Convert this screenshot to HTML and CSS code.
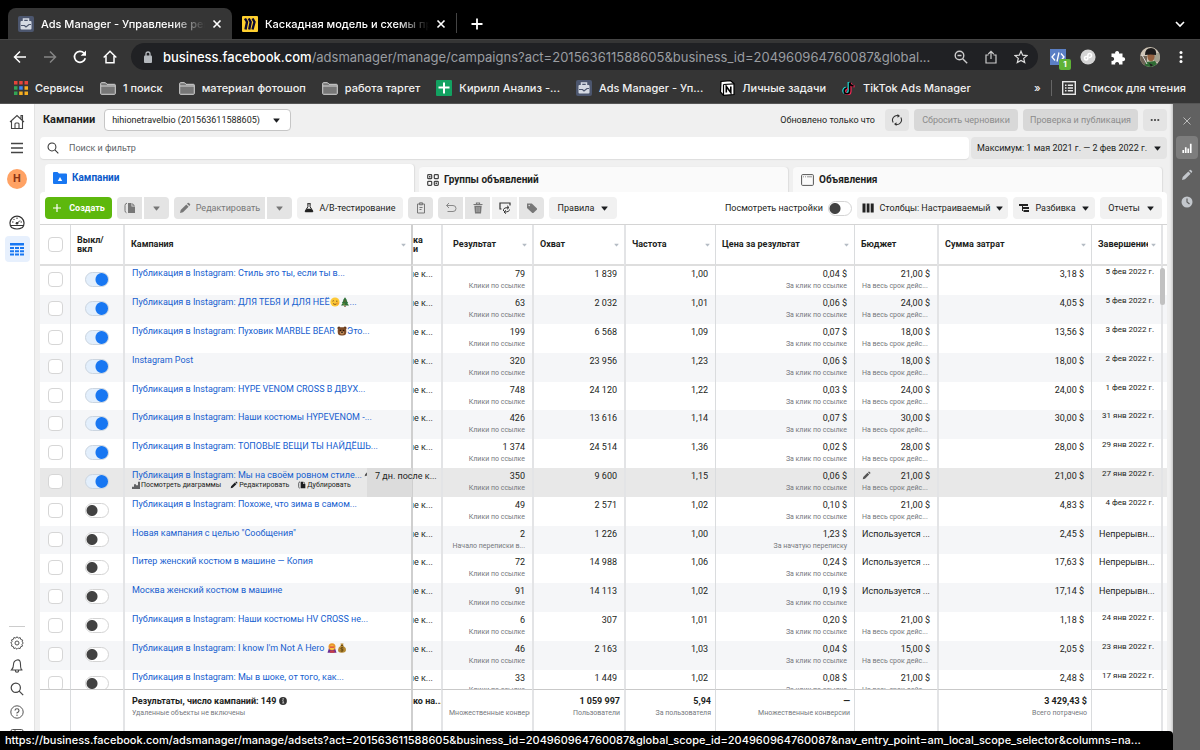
FILE: index.html
```html
<!DOCTYPE html>
<html lang="ru">
<head>
<meta charset="utf-8">
<title>Ads Manager - Управление рекламой</title>
<link rel="stylesheet" href="styles.css">
</head>
<body>
<svg class="sprite" aria-hidden="true">
  <symbol id="x" viewBox="0 0 10 10"><path d="M1.500 1.500l7 7M8.500 1.500l-7 7" fill="none" stroke="currentColor" stroke-width="1.600"/></symbol>
  <symbol id="ads" viewBox="0 0 16 16"><rect width="16" height="16" rx="2" fill="#4c566e"/><path d="M5.500 5V3h5v2" fill="none" stroke="#d5dae3" stroke-width="1.500"/><rect x="2.500" y="5" width="11" height="8.500" rx="1" fill="#d5dae3"/><path d="M3 9.500h3.500l1.500 1.500 3-2.500h2" fill="none" stroke="#4c566e" stroke-width="1.200"/></symbol>
  <symbol id="folder" viewBox="0 0 16 13"><path d="M.7 11.500V1.500q0-.8.8-.8h4l1.500 1.600h7.500q.8 0 .8.800v8.400q0 .8-.8.800h-13q-.8 0-.8-.8z" fill="#777" stroke="#d6d6d6"/><path d="M1 4h14" stroke="#d6d6d6"/></symbol>
  <symbol id="caret" viewBox="0 0 8 5"><path d="M.8.3h6.400q.7 0 .3.600L4.500 4.500q-.5.500-1 0L.5.900Q.1.300.8.300z" fill="currentColor"/></symbol>
  <symbol id="pencil" viewBox="0 0 12 12"><path d="M1 11l.7-3L7.300 2.400l2.300 2.300L4 10.300zM8 1.700l.7-.7q.6-.5 1.200 0l1.100 1.100q.5.600 0 1.200l-.7.700z" fill="currentColor"/></symbol>
  <symbol id="copy" viewBox="0 0 12 12"><path d="M3 1.200Q1 1.500 1 3.500v5q0 2 1.500 2.300" fill="none" stroke="currentColor"/><path d="M4 1h3.500v3.500H11V11H4z" fill="currentColor"/><path d="M8.300.900L11 3.700H8.300z" fill="currentColor"/></symbol>
  <symbol id="chart" viewBox="0 0 12 12"><path d="M.5 8.500h2V12h-2zM3.500 5h2v7h-2zM6.500 6.500h2V12h-2zM9.500 1h2v11h-2z" fill="currentColor"/></symbol>
  <symbol id="search" viewBox="0 0 14 14"><circle cx="5.800" cy="5.800" r="4.600" fill="none" stroke="currentColor" stroke-width="1.200"/><path d="M9.200 9.200l4 4" stroke="currentColor" stroke-width="1.200"/></symbol>
  <symbol id="face" viewBox="0 0 10 10"><circle cx="5" cy="5" r="4.600" fill="#fdc936"/><path d="M2.500 4.200q.8-1 1.600 0M6 4.200h1.500M3 6.500q2 2 4 0" fill="none" stroke="#6b431c" stroke-width=".8"/><circle cx="7.500" cy="6.500" r="1.300" fill="#f5a12c"/></symbol>
  <symbol id="tree" viewBox="0 0 10 10"><path d="M5 .3L7.200 3.500H6.500L8.200 6H7.300l1.700 2.600H1L2.700 6h-.9l1.700-2.500h-.7z" fill="#2f7137"/><path d="M4.400 8.600h1.200V10H4.400z" fill="#7a4a22"/><circle cx="5" cy="4" r=".5" fill="#e33"/><circle cx="4" cy="7" r=".5" fill="#fc3"/></symbol>
  <symbol id="bear" viewBox="0 0 10 10"><circle cx="2" cy="2" r="1.600" fill="#5f371b"/><circle cx="8" cy="2" r="1.600" fill="#5f371b"/><rect x=".7" y="1.200" width="8.600" height="8.400" rx="3.600" fill="#7d4a26"/><ellipse cx="5" cy="6.800" rx="2.200" ry="1.700" fill="#c08c5b"/><circle cx="3.300" cy="4.300" r=".6"/><circle cx="6.700" cy="4.300" r=".6"/><ellipse cx="5" cy="6.200" rx=".9" ry=".6"/></symbol>
  <symbol id="hero" viewBox="0 0 10 10"><path d="M.5 9.800L2 5h6l1.500 4.800z" fill="#6c2d92"/><path d="M3 9.800V7.500h4.500v2.300z" fill="#c53c46"/><circle cx="5" cy="3.800" r="3.500" fill="#e8972c"/><circle cx="5" cy="4.600" r="2.300" fill="#fcc74a"/><path d="M2.800 3.500h4.400v1.200H2.800z" fill="#d4313f"/></symbol>
  <symbol id="money" viewBox="0 0 10 10"><path d="M3.500.500h3L6 2.500q3 2 3 4.500T5 9.700 1 7t3-4.500z" fill="#b58a35"/><path d="M3.800 2.500h2.400" stroke="#6b4a14"/><path d="M6.500 5q-1.500-1-2.500 0t1 1.300 1 1.300-2.500.2M5 4v5" stroke="#5d410f" stroke-width=".7" fill="none"/></symbol>
</svg>

<header class="browser">
  <div class="tabstrip">
    <div class="btab active"><svg class="fav"><use href="#ads"/></svg><span class="btitle">Ads Manager - Управление рекламой</span><button class="plain" aria-label="Закрыть"><svg class="i10"><use href="#x"/></svg></button></div>
    <div class="btab"><svg class="fav" viewBox="0 0 16 16"><rect width="16" height="16" rx="1" fill="#ffd02f"/><path d="M3 2.500l2 3.500-1.500 7.500M6.700 2.500l2 3.500-1.500 7.500M10.500 2.500l2 3.500-2 7.500" fill="none" stroke="#0b0832" stroke-width="2.400"/></svg><span class="btitle">Каскадная модель и схемы процессов</span><button class="plain" aria-label="Закрыть"><svg class="i10"><use href="#x"/></svg></button></div>
    <i class="tabdiv"></i>
    <button class="plain newtab" aria-label="Новая вкладка"><svg class="i12" viewBox="0 0 12 12"><path d="M6 .500v11M.5 6h11" stroke="#fff" stroke-width="1.800"/></svg></button>
    <button class="plain more" aria-label="Список вкладок"><svg class="i10" viewBox="0 0 10 10"><path d="M1 3l4 4 4-4" fill="none" stroke="#fff" stroke-width="1.600"/></svg></button>
  </div>
  <div class="navbar">
    <button class="plain" aria-label="Назад"><svg class="i14" viewBox="0 0 14 14"><path d="M13 7H2M7 1.500L1.500 7 7 12.500" fill="none" stroke="#fff" stroke-width="1.500"/></svg></button>
    <button class="plain" aria-label="Вперёд"><svg class="i14" viewBox="0 0 14 14"><path d="M1 7h11M7 1.500L12.500 7 7 12.500" fill="none" stroke="#858585" stroke-width="1.500"/></svg></button>
    <button class="plain" aria-label="Обновить"><svg class="i14" viewBox="0 0 14 14"><path d="M12.300 8.300A5.500 5.500 0 1 1 11 3" fill="none" stroke="#fff" stroke-width="1.700"/><path d="M13 .500v5.300H7.700z" fill="#fff"/></svg></button>
    <button class="plain" aria-label="Домой"><svg class="i14" viewBox="0 0 14 14"><path d="M.7 7.500L7 1.300l6.300 6.200M3 6v6.700h8V6" fill="none" stroke="#fff" stroke-width="1.500"/></svg></button>
    <div class="omni">
      <svg class="lock" viewBox="0 0 10 12"><rect x="1" y="4.500" width="8" height="7.500" rx="1" fill="#b4b8bd"/><path d="M3 5V3q0-2 2-2t2 2v2" fill="none" stroke="#b4b8bd" stroke-width="1.300"/></svg>
      <span class="url"><b>business.facebook.com</b>/adsmanager/manage/campaigns?act=201563611588605&amp;business_id=204960964760087&amp;global...</span>
      <button class="plain" aria-label="Масштаб"><svg class="i14" viewBox="0 0 14 14"><circle cx="5.500" cy="5.500" r="4.300" fill="none" stroke="#ccc" stroke-width="1.400"/><path d="M8.700 8.700l4.500 4.500M3.500 5.500h4" stroke="#ccc" stroke-width="1.400"/></svg></button>
      <button class="plain" aria-label="Поделиться"><svg class="i14" viewBox="0 0 14 14"><path d="M4.500 5H2v8h10V5H9.500M7 9V1.500M4.300 4L7 1.300 9.700 4" fill="none" stroke="#ccc" stroke-width="1.200"/></svg></button>
      <button class="plain" aria-label="В закладки"><svg class="i14" viewBox="0 0 14 14"><path d="M7 1.200l1.700 4 4.300.4-3.300 2.800 1 4.200L7 10.400l-3.700 2.200 1-4.200L1 5.600l4.300-.4z" fill="none" stroke="#ddd" stroke-width="1.200"/></svg></button>
    </div>
    <span class="ext"><svg class="i16" viewBox="0 0 16 16"><rect width="16" height="16" fill="#5b7fc4"/><path d="M5 4.500L2 8l3 3.500M11 4.500L14 8l-3 3.500M9 3.500l-2 9" fill="none" stroke="#fff" stroke-width="1.300"/></svg><em class="badge">1</em></span>
    <svg class="i16" viewBox="0 0 16 16"><circle cx="8" cy="8" r="7.600" fill="#d4d4d4"/><path d="M7.300 7.200q-2.800 0-2.800 1.900t1.700 1.900 1.700-1.900V6.500q0-1.900 1.800-1.900t1.800 1.900-2.500 2" fill="none" stroke="#fff" stroke-width="1.500"/></svg>
    <svg class="i16" viewBox="0 0 16 16"><path d="M1.500 4.500h3.700a2 2 0 1 1 3.800 0h3.500v3.800a2 2 0 1 1 0 3.800v3.400H9a2 2 0 1 0-3.800 0H1.500v-3.700a2 2 0 1 0 0-3.800z" fill="#fff"/></svg>
    <svg class="i20" viewBox="0 0 20 20"><defs><clipPath id="av"><circle cx="10" cy="10" r="10"/></clipPath></defs><g clip-path="url(#av)"><path fill="#cfc5b6" d="M0 0h20v20H0z"/><path fill="#6f6456" d="M0 9h7v11H0z"/><path fill="#a2a08f" d="M14 6h6v9h-6z"/><path fill="#2f6b34" d="M4 20l2-5 9-1 4 6z"/><ellipse cx="11" cy="9.500" rx="3.600" ry="4.800" fill="#94603f"/><path fill="#1d1b1b" d="M5 8q0-7 6-7t5 7q-5-1-11 0zM9 16l4 2-2 2z"/><path d="M2 8l5 9" stroke="#ddd"/></g></svg>
    <svg class="i14" viewBox="0 0 14 14"><circle cx="7" cy="2.500" r="1.500" fill="#fff"/><circle cx="7" cy="7" r="1.500" fill="#fff"/><circle cx="7" cy="11.500" r="1.500" fill="#fff"/></svg>
  </div>
  <nav class="bookmarks">
    <a href="#"><svg class="i14" viewBox="0 0 14 14"><path d="M0 0h3.500v3.500H0zM5.200 0h3.500v3.500H5.200zM10.500 0H14v3.500h-3.500z" fill="#e5453a"/><path d="M0 5.200h3.500v3.500H0z" fill="#33a455"/><path d="M5.200 5.200h3.500v3.500H5.200z" fill="#3f86f2"/><path d="M10.500 5.200H14v3.500h-3.500zM5.200 10.500h3.500V14H5.200zM10.500 10.500H14V14h-3.500z" fill="#f6ae20"/><path d="M0 10.500h3.500V14H0z" fill="#33a455"/></svg>Сервисы</a>
    <a href="#"><svg class="fold"><use href="#folder"/></svg>1 поиск</a>
    <a href="#"><svg class="fold"><use href="#folder"/></svg>материал фотошоп</a>
    <a href="#"><svg class="fold"><use href="#folder"/></svg>работа таргет</a>
    <a href="#"><svg class="i16" viewBox="0 0 16 16"><rect width="16" height="16" rx="1" fill="#12a261"/><path d="M8 2.500v11M2.500 7.500h11" stroke="#fff" stroke-width="2"/></svg>Кирилл Анализ -...</a>
    <a href="#"><svg class="i16"><use href="#ads"/></svg>Ads Manager - Уп...</a>
    <a href="#"><svg class="i16" viewBox="0 0 16 16"><path d="M2 1.500l9.500-.8L15 3.500v11l-10.500.800L1.500 12z" fill="#fff" stroke="#000" stroke-width="1.200"/><path d="M4.500 4.500L15 3.800M4.500 4.500v10.500" stroke="#000" stroke-width="1.200"/><path d="M7.300 12.500v-6l4.500 6v-6" fill="none" stroke="#000" stroke-width="1.600"/></svg>Личные задачи</a>
    <a href="#"><svg class="i14" viewBox="0 0 14 14"><g fill="none" stroke-width="2"><path d="M6.600 1v8.500a2.700 2.700 0 1 1-2.700-2.700M6.600 1q.5 3 4 3.500" stroke="#25d8d2"/><path d="M8.600 2v8.500a2.700 2.700 0 1 1-2.700-2.700M8.600 2q.5 3 4 3.500" stroke="#f32a56"/><path d="M7.600 1.500V10a2.700 2.700 0 1 1-2.700-2.700M7.600 1.500q.5 3 4 3.500" stroke="#000" stroke-width="1.600"/></g></svg>TikTok Ads Manager</a>
    <span class="chev">»</span><i class="bdiv"></i>
    <a href="#"><svg class="i14" viewBox="0 0 14 14"><rect x=".7" y=".7" width="12.600" height="12.600" fill="none" stroke="#e8e8e8" stroke-width="1.400"/><path d="M3 4.200h1.500M3 7h1.500M3 9.800h1.500M5.800 4.200H11M5.800 7H11M5.800 9.800H11" stroke="#e8e8e8" stroke-width="1.400"/></svg>Список для чтения</a>
  </nav>
</header>

<div class="app">
  <nav class="side">
    <a href="#" aria-label="Главная"><svg class="i16" viewBox="0 0 16 16"><path d="M1 8l7-6.500L15 8M2.500 7v7.500h11V7M6 14.500V10q0-1 1-1h2q1 0 1 1v4.500M12 4.500v-3h1.500V6" fill="none" stroke="#444" stroke-width="1.100"/></svg></a>
    <a href="#" aria-label="Меню"><svg class="i14" viewBox="0 0 14 14"><path d="M1 2.500h12M1 7h12M1 11.500h12" stroke="#444" stroke-width="1.300"/></svg></a>
    <span class="me">H</span>
    <a href="#" aria-label="Обзор"><svg class="i16" viewBox="0 0 16 16"><path d="M2.500 12.500A7 7 0 1 1 13.500 12.500Q8 15.500 2.500 12.500zM1.200 10.500h13.600" fill="none" stroke="#333" stroke-width="1.200"/><path d="M8 8.500l3-3M3 7h1.500M11.500 7H13M8 2.500V4M4.500 4l1 1" stroke="#333"/><circle cx="8" cy="8.300" r="1.300" fill="#333"/></svg></a>
    <a href="#" class="on" aria-label="Кампании"><svg class="i16" viewBox="0 0 16 16"><path d="M1 2h14v2.500H1zM1 6h4v2H1zM6 6h4v2H6zM11 6h4v2h-4zM1 9.300h4v2H1zM6 9.300h4v2H6zM11 9.300h4v2h-4zM1 12.600h4v2H1zM6 12.600h4v2H6zM11 12.600h4v2h-4z" fill="#1877f2"/></svg></a>
    <div class="sidebottom">
      <a href="#" aria-label="Настройки"><svg class="i14" viewBox="0 0 14 14"><path d="M7 .700l1.300 1.500 1.900-.6.600 1.900 1.900.600-.5 1.800L13.300 7l-1.300 1.300.5 1.800-1.800.6-.6 1.900-1.900-.5L7 13.300l-1.300-1.300-1.800.5-.6-1.900-1.900-.6.600-1.800L.7 7 2 5.700l-.5-1.800 1.800-.5.600-1.900 1.900.600z" fill="none" stroke="#555"/><circle cx="7" cy="7" r="2" fill="none" stroke="#555"/></svg></a>
      <a href="#" aria-label="Уведомления"><svg class="i14" viewBox="0 0 14 14"><path d="M1.500 11q2-2 2-5.500T7 1t3.500 4.500T12.500 11zM5.300 11.300q0 2 1.700 2t1.700-2" fill="none" stroke="#444" stroke-width="1.100"/></svg></a>
      <a href="#" aria-label="Поиск"><svg class="i14 g"><use href="#search"/></svg></a>
      <a href="#" aria-label="Справка"><svg class="i14" viewBox="0 0 14 14"><circle cx="7" cy="7" r="6.200" fill="none" stroke="#555"/><path d="M5 5.500Q5 3.800 7 3.800t2 1.700T7 7.800V8.500" fill="none" stroke="#555" stroke-width="1.100"/><circle cx="7" cy="10.200" r=".7" fill="#555"/></svg></a>
      <a href="#" aria-label="Панель"><svg class="i14" viewBox="0 0 14 14"><path d="M1 13V3q0-1.500 1.500-1.500h9Q13 1.500 13 3v10zM5 1.500V13M5 5h8" fill="none" stroke="#555"/></svg></a>
    </div>
  </nav>

  <main class="main">
    <div class="head">
      <h1>Кампании</h1>
      <button class="acct">hihionetravelbio (201563611588605)<svg class="car"><use href="#caret"/></svg></button>
      <span class="upd">Обновлено только что</span>
      <button class="btn gray sq" aria-label="Обновить"><svg class="i12" viewBox="0 0 12 12"><path d="M2.200 8.500A4.600 4.600 0 0 1 7.500 1.700M9.800 3.500A4.600 4.600 0 0 1 4.500 10.300" fill="none" stroke="#333" stroke-width="1.100"/><path d="M6.500 0L9 2 6.500 3.700zM5.500 8.300L3 10l2.500 2z" fill="#333"/></svg></button>
      <button class="btn off drafts" disabled>Сбросить черновики</button>
      <button class="btn off pub" disabled>Проверка и публикация</button>
      <button class="btn gray sq dots" aria-label="Ещё"><svg class="i10" viewBox="0 0 10 10"><path d="M.8 4.300h1.800v1.500H.8zM4.100 4.300h1.800v1.500H4.100zM7.400 4.300h1.800v1.500H7.400z" fill="#222"/></svg></button>
    </div>
    <div class="find">
      <label class="searchbox"><svg class="i12"><use href="#search"/></svg><input type="text" placeholder="Поиск и фильтр" aria-label="Поиск и фильтр"></label>
      <button class="btn gray date">Максимум: 1 мая 2021 г. — 2 фев 2022 г.<svg class="car"><use href="#caret"/></svg></button>
    </div>
    <div class="levels">
      <button class="level current"><svg class="lv" viewBox="0 0 14 12"><path d="M0 1q0-1 1-1h3.500l1.500 1.500h7q1 0 1 1V11q0 1-1 1H1q-1 0-1-1z" fill="#1877f2"/><path d="M7 5l2.200 4H4.800z" fill="#fff"/></svg>Кампании</button>
      <button class="level"><svg class="i12" viewBox="0 0 12 12"><g fill="none" stroke="#444" stroke-width="1.200"><rect x=".7" y=".7" width="4" height="4" rx=".8"/><rect x="7.300" y=".7" width="4" height="4" rx=".8"/><rect x=".7" y="7.300" width="4" height="4" rx=".8"/><rect x="7.300" y="7.300" width="4" height="4" rx=".8"/></g><path d="M2 2h1.500v1.500H2zM8.500 8.500H10V10H8.500z" fill="#444"/></svg>Группы объявлений</button>
      <button class="level"><svg class="ad" viewBox="0 0 13 12"><rect x=".6" y=".6" width="11.800" height="10.800" rx="1" fill="none" stroke="#555"/><path d="M2 2.800h1M4 2.800h1M6 2.800h5" stroke="#777" stroke-width=".8"/></svg>Объявления</button>
    </div>
    <section class="panel">
      <div class="tools">
        <button class="btn create"><svg class="i10" viewBox="0 0 10 10"><path d="M5 1v8M1 5h8" stroke="#fff" stroke-width="1.200"/></svg>Создать</button>
        <span class="group"><button class="btn dim w25" aria-label="Дублировать"><svg class="i12"><use href="#copy"/></svg></button><button class="btn dim w25" aria-label="Ещё"><svg class="car"><use href="#caret"/></svg></button></span>
        <span class="group"><button class="btn dim edit"><svg class="i12"><use href="#pencil"/></svg>Редактировать</button><button class="btn dim w25" aria-label="Ещё"><svg class="car"><use href="#caret"/></svg></button></span>
        <button class="btn ab"><svg class="i10" viewBox="0 0 12 12"><path d="M4 .800h4M4.700 1v3.500L1.500 9.500v1h9v-1L7.300 4.500V1" fill="none" stroke="#222" stroke-width="1.200"/><path d="M3.200 7h5.600l2 3.800H1.200z" fill="#222"/></svg>A/B-тестирование</button>
        <button class="btn dim w25" aria-label="Вставить"><svg class="i12" viewBox="0 0 12 12"><path d="M2.500 2h7v9h-7zM4.500.800h3v2h-3zM4.500 5.500h3M4.500 7.500h2" fill="none" stroke="#777"/></svg></button>
        <span class="group"><button class="btn dim w25" aria-label="Отменить"><svg class="i12" viewBox="0 0 12 12"><path d="M4 1L1.500 3.500 4 6M1.500 3.500H8q3 0 3 3t-3 3H2.500" fill="none" stroke="#888"/></svg></button><button class="btn dim w25" aria-label="Удалить"><svg class="i12" viewBox="0 0 12 12"><path d="M1.500 2.500h9M4.500 2V1h3v1" fill="none" stroke="#777" stroke-width="1.200"/><path d="M2.300 3.700h7.400L9 11.500H3z" fill="#777"/><path d="M4.700 5v5M6 5v5M7.300 5v5" stroke="#ccc" stroke-width=".5"/></svg></button><button class="btn w25" aria-label="Экспорт"><svg class="i12" viewBox="0 0 12 12"><path d="M2.500 7H1V1h10v2.500" fill="none" stroke="#333" stroke-width="1.200"/><path d="M4.500 9V7.500Q4.500 5.500 9.500 5.500M8 3.700L10 5.500 8 7.300M10.500 7.500q0 2.500-5 2.500M7 8.300L5 10l2 1.700" fill="none" stroke="#333"/></svg></button><button class="btn dim w25" aria-label="Метка"><svg class="i12" viewBox="0 0 12 12"><path d="M1 1.500h4.800L11 6.500v1L7.300 11h-1L1 6z" fill="#777"/><circle cx="3.200" cy="3.500" r=".8" fill="#ddd"/></svg></button></span>
        <button class="btn rules">Правила<svg class="car"><use href="#caret"/></svg></button>
        <label class="setup">Посмотреть настройки<input type="checkbox" class="toggle"></label>
        <button class="btn cols"><svg class="i12" viewBox="0 0 12 12"><path d="M.5 1.500h3v9h-3zM4.700 1.500h2.800v9H4.700zM8.700 1.500h3v9h-3z" fill="#222"/></svg>Столбцы: Настраиваемый<svg class="car"><use href="#caret"/></svg></button>
        <button class="btn brk"><svg class="i10" viewBox="0 0 10 10"><path d="M0 1h9v2H0zM3 4h7v2H3zM4.500 7h5.500v2H4.500zM3 3h1v5H3z" fill="#222"/></svg>Разбивка<svg class="car"><use href="#caret"/></svg></button>
        <button class="btn rep">Отчеты<svg class="car"><use href="#caret"/></svg></button>
      </div>
      <div class="scroll">
        <table>
          <colgroup><col class="c-check"><col class="c-sw"><col><col class="c-attr"><col class="c-res"><col class="c-reach"><col class="c-freq"><col class="c-cost"><col class="c-bud"><col class="c-spent"><col class="c-end"><col class="c-pad"></colgroup>
          <thead><tr>
            <th><input type="checkbox" class="check" aria-label="Выбрать все"></th>
            <th class="sw">Выкл/<br>вкл</th>
            <th class="l2">Кампания<svg class="sort"><use href="#caret"/></svg></th>
            <th class="frozen">ка<br>и</th>
            <th class="l2 res">Результат<svg class="sort"><use href="#caret"/></svg></th>
            <th class="l2">Охват<svg class="sort"><use href="#caret"/></svg></th>
            <th class="l2">Частота<svg class="sort"><use href="#caret"/></svg></th>
            <th>Цена за результат<svg class="sort"><use href="#caret"/></svg></th>
            <th>Бюджет</th>
            <th class="l2">Сумма затрат<svg class="sort"><use href="#caret"/></svg></th>
            <th><span class="cut">Завершение</span><svg class="sort"><use href="#caret"/></svg></th>
            <th class="l2"></th>
          </tr></thead>
          <tbody id="rows"></tbody>
          <tfoot><tr>
            <td></td><td></td>
            <td class="l2 name"><b>Результаты, число кампаний: 149 <svg class="info" viewBox="0 0 8 8"><circle cx="4" cy="4" r="3.900" fill="#333"/><path d="M3.200 3.600h1v2.400M3.200 6h2M3.800 1.600h.6v.7h-.6z" stroke="#fff" stroke-width=".6" fill="none"/></svg></b><small>Удаленные объекты не включены</small></td>
            <td class="frozen"><b>ко на...</b></td>
            <td class="l2"><b>&nbsp;</b><small class="clip">Множественные конверсии</small></td>
            <td class="l2 num"><b>1 059 997</b><small>Пользователи</small></td>
            <td class="l2 num"><b>5,94</b><small>За пользователя</small></td>
            <td class="num"><b>—</b><small>Множественные конверсии</small></td>
            <td></td>
            <td class="l2 num"><b>3 429,43 $</b><small>Всего потрачено</small></td>
            <td></td><td class="l2"></td>
          </tr></tfoot>
        </table>
        <i class="thumb"></i>
      </div>
    </section>
  </main>

  <aside class="rail">
    <button class="plain" aria-label="Закрыть"><svg class="i10" viewBox="0 0 10 10"><path d="M1.500 1.500l7 7M8.500 1.500l-7 7" stroke="#bbb"/></svg></button>
    <button class="plain sel" aria-label="Диаграммы"><svg class="i10"><use href="#chart"/></svg></button>
    <button class="plain" aria-label="Редактировать"><svg class="i12"><use href="#pencil"/></svg></button>
    <button class="plain" aria-label="История"><svg class="i12" viewBox="0 0 12 12"><circle cx="6" cy="6" r="5.500" fill="#c3c7cc"/><path d="M6 2.500V6l2.500 2" fill="none" stroke="#606060" stroke-width="1.200"/></svg></button>
  </aside>
</div>
<div class="status">https://business.facebook.com/adsmanager/manage/adsets?act=201563611588605&amp;business_id=204960964760087&amp;global_scope_id=204960964760087&amp;nav_entry_point=am_local_scope_selector&amp;columns=na...</div>
<script src="app.js"></script>
</body>
</html>
```

FILE: styles.css
```css
* { box-sizing: border-box; }
body { margin: 0; height: 100vh; display: flex; flex-direction: column; overflow: hidden; font: 9px/12px Roboto, "Noto Sans", sans-serif; color: #1c1e21; background: #f0f0f0; }
button, input { font: inherit; color: inherit; margin: 0; }
button { border: 0; padding: 0; cursor: pointer; }
a { color: inherit; text-decoration: none; }
svg { display: block; flex: none; }
.sprite { position: absolute; width: 0; height: 0; }
.plain { background: none; display: flex; align-items: center; justify-content: center; }
.i10 { width: 10px; height: 10px; }
.i12 { width: 12px; height: 12px; }
.i14 { width: 14px; height: 14px; }
.i16, .fav { width: 16px; height: 16px; }
.i20 { width: 20px; height: 20px; }
.car { width: 7px; height: 5px; }
.g { color: #444; }

/* Browser chrome */
.browser { flex: none; background: #353535; color: #f1f1f1; font: 500 11px/16px Inter, "Open Sans", sans-serif; }
.tabstrip { height: 39px; background: #000; display: flex; align-items: flex-end; padding-left: 8px; }
.btab { width: 224px; height: 31px; display: flex; align-items: center; gap: 7px; padding: 0 10px; color: #fff; }
.btab.active { background: #353535; border-radius: 8px 8px 0 0; }
.btitle { flex: 1; overflow: hidden; white-space: nowrap; -webkit-mask-image: linear-gradient(90deg, #000 80%, transparent); mask-image: linear-gradient(90deg, #000 80%, transparent); }
.btab .plain { color: #fff; }
.tabdiv { width: 1px; height: 20px; background: #444; margin-bottom: 6px; }
.newtab { width: 40px; height: 31px; }
.more { width: 40px; height: 31px; margin-left: auto; }
.navbar { height: 34px; border-top: 1px solid #444; display: flex; align-items: center; gap: 16px; padding: 0 14px 0 13px; }
.omni { flex: 1; height: 27px; border-radius: 14px; background: #202124; display: flex; align-items: center; gap: 16px; padding: 0 10px 0 12px; margin: 0 -4px 0 -2px; min-width: 0; }
.lock { width: 10px; height: 12px; }
.url { flex: 1; font-size: 13px; font-weight: 400; color: #9a9da1; margin-left: -6px; white-space: nowrap; overflow: hidden; }
.url b { color: #fff; font-weight: 500; }
.navbar > svg, .ext { margin-right: -2px; }
.ext { position: relative; }
.badge { position: absolute; left: 9px; top: 10px; width: 12px; height: 11px; border-radius: 2px; background: #5fb336; color: #fff; font: 700 8px/11px Inter, sans-serif; text-align: center; }
.bookmarks { height: 31px; display: flex; align-items: center; gap: 16px; padding: 0 14px; border-bottom: 1px solid #555; }
.bookmarks a { display: flex; align-items: center; gap: 7px; white-space: nowrap; }
.fold { width: 16px; height: 13px; }
.chev { margin-left: auto; }
.bdiv { width: 1px; height: 16px; background: #666; margin: 0 -6px; }

/* App */
.app { flex: 1; display: flex; min-height: 0; }
.side { width: 35px; background: #fff; display: flex; flex-direction: column; align-items: center; padding-top: 5px; border-right: 1px solid #e2e2e2; overflow: hidden; }
.side a { width: 25px; height: 26px; display: flex; align-items: center; justify-content: center; flex: none; }
.me { width: 20px; height: 20px; margin: 8px 0 21px; border-radius: 50%; background: #ffa264; color: #8a3414; font: 700 11px/20px Roboto, sans-serif; text-align: center; flex: none; }
.side .on { background: #e7f0fd; border-radius: 4px; }
.sidebottom { margin-top: auto; border-top: 1px solid #ccc; padding-top: 4px; width: 16px; height: 124px; display: flex; flex-direction: column; align-items: center; }
.sidebottom a { height: 23px; }
.main { flex: 1; min-width: 0; display: flex; flex-direction: column; padding: 5px 6px 0 5px; box-shadow: inset -3px 0 3px -2px #bbb; }
.head { display: flex; align-items: center; gap: 5px; padding-left: 3px; height: 22px; }
h1 { margin: 0 4px 0 0; font: 700 11px/16px Roboto, sans-serif; }
.acct { width: 187px; height: 22px; display: flex; align-items: center; justify-content: space-between; padding: 0 10px 0 7px; border: 1px solid #c6c6c6; border-radius: 4px; background: #fff; }
.upd { margin-left: auto; margin-right: 5px; white-space: nowrap; }
.btn { height: 22px; display: flex; align-items: center; justify-content: center; gap: 7px; border-radius: 4px; background: #f1f1f1; white-space: nowrap; flex: none; }
.btn.gray { background: #e4e4e4; }
.btn.off { background: #d8d8d8; color: #8c8c8c; }
.btn.dim { background: #e4e4e4; color: #777; }
.sq { width: 24px; }
.drafts { width: 104px; }
.pub { width: 115px; }
.find { display: flex; gap: 2px; margin-top: 6px; }
.searchbox { flex: 1; height: 22px; display: flex; align-items: center; gap: 10px; padding: 0 7px; background: #fff; border-radius: 4px; box-shadow: 0 1px 1px #ddd; color: #333; }
.searchbox input { flex: 1; border: 0; outline: 0; background: none; padding: 0; }
.searchbox input::placeholder { color: #606468; opacity: 1; }
.date { width: 196px; }
.levels { display: flex; align-items: flex-end; gap: 5px; padding: 0 5px; margin-top: 5px; }
.level { flex: 1; height: 25px; display: flex; align-items: center; gap: 5px; padding: 0 8px; border-radius: 4px 4px 0 0; background: #fafafa; font: 700 10px/14px Roboto, sans-serif; box-shadow: 1px 0 1px #ddd; }
.level.current { height: 28px; background: #fff; color: #0a59c9; }
.lv { width: 14px; height: 12px; }
.ad { width: 13px; height: 12px; }
.panel { flex: 1; min-height: 0; background: #fff; border-radius: 4px 4px 0 0; display: flex; flex-direction: column; }
.tools { display: flex; align-items: center; gap: 5px; padding: 5px; height: 32px; flex: none; }
.create { width: 67px; background: #5db80d; color: #fff; font-weight: 700; }
.group { display: flex; gap: 2px; }
.group .btn:not(:last-child) { border-top-right-radius: 0; border-bottom-right-radius: 0; }
.group .btn:not(:first-child) { border-top-left-radius: 0; border-bottom-left-radius: 0; }
.w25 { width: 25px; }
.edit { width: 91px; gap: 5px; }
.ab { width: 106px; gap: 5px; }
.rules { width: 68px; }
.setup { margin-left: auto; display: flex; align-items: center; gap: 5px; white-space: nowrap; }
.cols { width: 151px; gap: 5px; }
.brk { width: 82px; gap: 6px; }
.rep { width: 62px; }

.toggle { appearance: none; width: 24px; height: 15px; border: 1px solid #d4d4d4; border-radius: 8px; background: #fff radial-gradient(circle at 6px 50%, #424242 5px, transparent 6px); }
.toggle:checked { border-color: #cbd5e0; background: #e3effc radial-gradient(circle at 16px 50%, #1877f2 6px, transparent 7px); }
.check { appearance: none; width: 15px; height: 15px; border: 1px solid #d6d6d6; border-radius: 4px; background: #fff; display: block; margin: 0 auto; }

/* Table */
.scroll { flex: 1; min-height: 0; overflow: hidden; position: relative; border-top: 1px solid #d4d4d4; }
table { width: 100%; table-layout: fixed; border-collapse: separate; border-spacing: 0; }
.c-check { width: 30px; } .c-sw { width: 53px; } .c-attr { width: 30px; } .c-res { width: 91px; } .c-reach { width: 92px; }
.c-freq { width: 91px; } .c-cost { width: 139px; } .c-bud { width: 83px; } .c-spent { width: 154px; } .c-end { width: 70px; } .c-pad { width: 6px; }
th, td { padding: 0 7px; text-align: left; vertical-align: top; border-left: 1px solid #dadcde; overflow: hidden; white-space: nowrap; }
th { padding-left: 6px; }
th:first-child, td:first-child { border-left: 0; padding: 0; vertical-align: middle; }
.l2 { border-left: 2px solid #e3e4e6; }
.frozen { border-left: 2px solid #cfcfcf; padding: 0; }
thead th { position: sticky; top: 0; z-index: 2; height: 41px; background: #fff; border-bottom: 2px solid #dedede; vertical-align: middle; font: 700 9px/9px Roboto, sans-serif; }
th.res { padding-left: 10px; }
.sort { position: absolute; right: 5px; top: 18px; width: 5px; height: 4px; color: #b5bcc4; }
.cut { display: block; overflow: hidden; width: 50px; }
tbody tr { height: 29px; }
tbody tr:nth-child(5n) { height: 28px; }
tbody tr:nth-child(even) { background: #f5f6f8; }
tbody tr.hover { background: #e8e8e8; }
tbody td:first-child, td.sw { padding: 0 0 2px; }
td.sw { vertical-align: middle; text-align: center; line-height: 0; }
td .v, td small { display: block; }
td .v { padding-top: 2px; line-height: 12px; height: 14px; }
td small { font-size: 7px; line-height: 12px; color: #75787c; }
tbody .name { padding-top: 1px; position: relative; overflow: visible; }
tbody .name a { color: #1560cf; display: flex; align-items: center; line-height: 12px; }
.emo { width: 10px; height: 10px; }
.num { text-align: right; }
.num .l { text-align: left; }
td.word .v { text-align: left; }
td.end { line-height: 12px; font-size: 8px; text-align: right; }
td.end.word { font-size: 9px; padding-top: 2px; text-align: left; }
tbody .frozen .v { display: flex; justify-content: flex-end; overflow: hidden; width: 20px; }
.acts { display: flex; gap: 9px; font-size: 7px; line-height: 8px; }
.acts button { display: flex; align-items: center; background: none; gap: 1px; }
.acts svg { width: 8px; height: 8px; }
.peek { position: absolute; z-index: 1; right: -25px; top: 0; bottom: 0; width: 69px; padding: 2px 0 0 8px; background: linear-gradient(90deg, #dcdcdc 45px, transparent 45px); }
.bud { position: relative; }
.bud .pen { position: absolute; left: 7px; top: 3px; width: 9px; height: 9px; color: #555; }
.name .pen { width: 8px; height: 8px; color: #555; margin: -4px 0 0 2px; }
tfoot td { position: sticky; bottom: 0; z-index: 2; height: 61px; background: #fff; border-top: 1px solid #c9c9c9; padding: 5px 4px 0 7px; }
tfoot td.l2:not(.name) { padding-left: 6px; }
tfoot b { display: flex; align-items: center; gap: 3px; line-height: 12px; }
tfoot .num b { justify-content: flex-end; }
tfoot td.frozen { padding: 5px 0 0; }
.info { width: 8px; height: 8px; }
.clip { overflow: hidden; width: 81px; }
.thumb { position: absolute; right: 2px; top: 43px; width: 5px; height: 37px; border-radius: 3px; background: #c1c1c1; z-index: 1; }

.rail { width: 27px; background: #616161; display: flex; flex-direction: column; align-items: center; gap: 4px; padding-top: 5px; color: #c3c7cc; }
.rail .plain { width: 22px; height: 23px; border-radius: 4px; color: inherit; }
.rail .sel { background: #7d7d7d; color: #fff; }
.status { position: absolute; left: 0; bottom: 0; height: 19px; width: calc(100% - 27px); padding: 0 10px 0 5px; background: #000; color: #fff; border-radius: 0 4px 0 0; font: 500 11px/19px Inter, sans-serif; white-space: nowrap; overflow: hidden; z-index: 5; }
```

FILE: app.js
```js
const P = 'Публикация в Instagram: ';
const icon = (id, cls) => `<svg class="${cls}"><use href="#${id}"/></svg>`;
const emo = id => icon(id, 'emo');
const click = 'Клики по ссылке';
const perClick = 'За клик по ссылке';

// name, on, result, reach, frequency, cost, budget, spent, end
const campaigns = [
  [P + 'Стиль это ты, если ты в...', 1, '79', '1 839', '1,00', '0,04', '21,00', '3,18', '5 фев 2022 г.'],
  [P + 'ДЛЯ ТЕБЯ И ДЛЯ НЕЁ' + emo('face') + emo('tree') + '...', 1, '63', '2 032', '1,01', '0,06', '24,00', '4,05', '5 фев 2022 г.'],
  [P + 'Пуховик MARBLE BEAR&nbsp;' + emo('bear') + 'Это...', 1, '199', '6 568', '1,09', '0,07', '18,00', '13,56', '3 фев 2022 г.'],
  ['Instagram Post', 1, '320', '23 956', '1,23', '0,06', '18,00', '18,00', '2 фев 2022 г.'],
  [P + 'HYPE VENOM CROSS В ДВУХ...', 1, '748', '24 120', '1,22', '0,03', '24,00', '24,00', '1 фев 2022 г.'],
  [P + 'Наши костюмы HYPEVENOM -...', 1, '426', '13 616', '1,14', '0,07', '30,00', '30,00', '31 янв 2022 г.'],
  [P + 'ТОПОВЫЕ ВЕЩИ ТЫ НАЙДЁШЬ...', 1, '1 374', '24 514', '1,36', '0,02', '28,00', '28,00', '29 янв 2022 г.'],
  [P + 'Мы на своём ровном стиле...', 1, '350', '9 600', '1,15', '0,06', '21,00', '21,00', '27 янв 2022 г.'],
  [P + 'Похоже, что зима в самом...', 0, '49', '2 571', '1,02', '0,10', '21,00', '4,83', '4 фев 2022 г.'],
  ['Новая кампания с целью "Сообщения"', 0, '2', '1 226', '1,00', '1,23', '', '2,45', ''],
  ['Питер женский костюм в машине — Копия', 0, '72', '14 988', '1,06', '0,24', '', '17,63', ''],
  ['Москва женский костюм в машине', 0, '91', '14 113', '1,02', '0,19', '', '17,14', ''],
  [P + 'Наши костюмы HV CROSS не...', 0, '6', '307', '1,01', '0,20', '21,00', '1,18', '24 янв 2022 г.'],
  [P + "I know I'm Not A Hero&nbsp;" + emo('hero') + emo('money'), 0, '46', '2 163', '1,03', '0,04', '15,00', '2,05', '23 янв 2022 г.'],
  [P + 'Мы в шоке, от того, как...', 0, '33', '1 449', '1,02', '0,08', '21,00', '2,48', '17 янв 2022 г.']
];
const HOVER = 7;
const MESSAGES = 9;

document.getElementById('rows').innerHTML = campaigns.map((c, i) => {
  const [name, on, res, reach, freq, cost, bud, spent, end] = c;
  const hover = i === HOVER;
  const msg = i === MESSAGES;
  const acts = hover ? `<div class="acts"><button>${icon('chart', '')}Посмотреть диаграммы</button><button>${icon('pencil', '')}Редактировать</button><button>${icon('copy', '')}Дублировать</button></div><span class="peek">7 дн. после к...</span>` : '';
  return `<tr class="${hover ? 'hover' : ''}">
    <td><input type="checkbox" class="check" aria-label="Выбрать"></td>
    <td class="sw"><input type="checkbox" class="toggle" aria-label="Выкл/вкл" ${on ? 'checked' : ''}></td>
    <td class="l2 name"><a href="#">${name}${hover ? icon('pencil', 'pen') : ''}</a>${acts}</td>
    <td class="frozen">${hover ? '' : '<span class="v">ле к...</span>'}</td>
    <td class="l2 num"><span class="v">${res}</span><small>${msg ? 'Начало переписки в...' : click}</small></td>
    <td class="l2 num"><span class="v">${reach}</span></td>
    <td class="l2 num"><span class="v">${freq}</span></td>
    <td class="num"><span class="v">${cost} $</span><small>${msg ? 'За начатую переписку' : perClick}</small></td>
    ${bud ? `<td class="num bud">${hover ? icon('pencil', 'pen') : ''}<span class="v">${bud} $</span><small class="l">На весь срок дейс...</small></td>` : '<td class="word"><span class="v">Используется ...</span></td>'}
    <td class="l2 num"><span class="v">${spent} $</span></td>
    ${end ? `<td class="end">${end}</td>` : '<td class="end word">Непрерывн...</td>'}
    <td class="l2"></td>
  </tr>`;
}).join('');
```
